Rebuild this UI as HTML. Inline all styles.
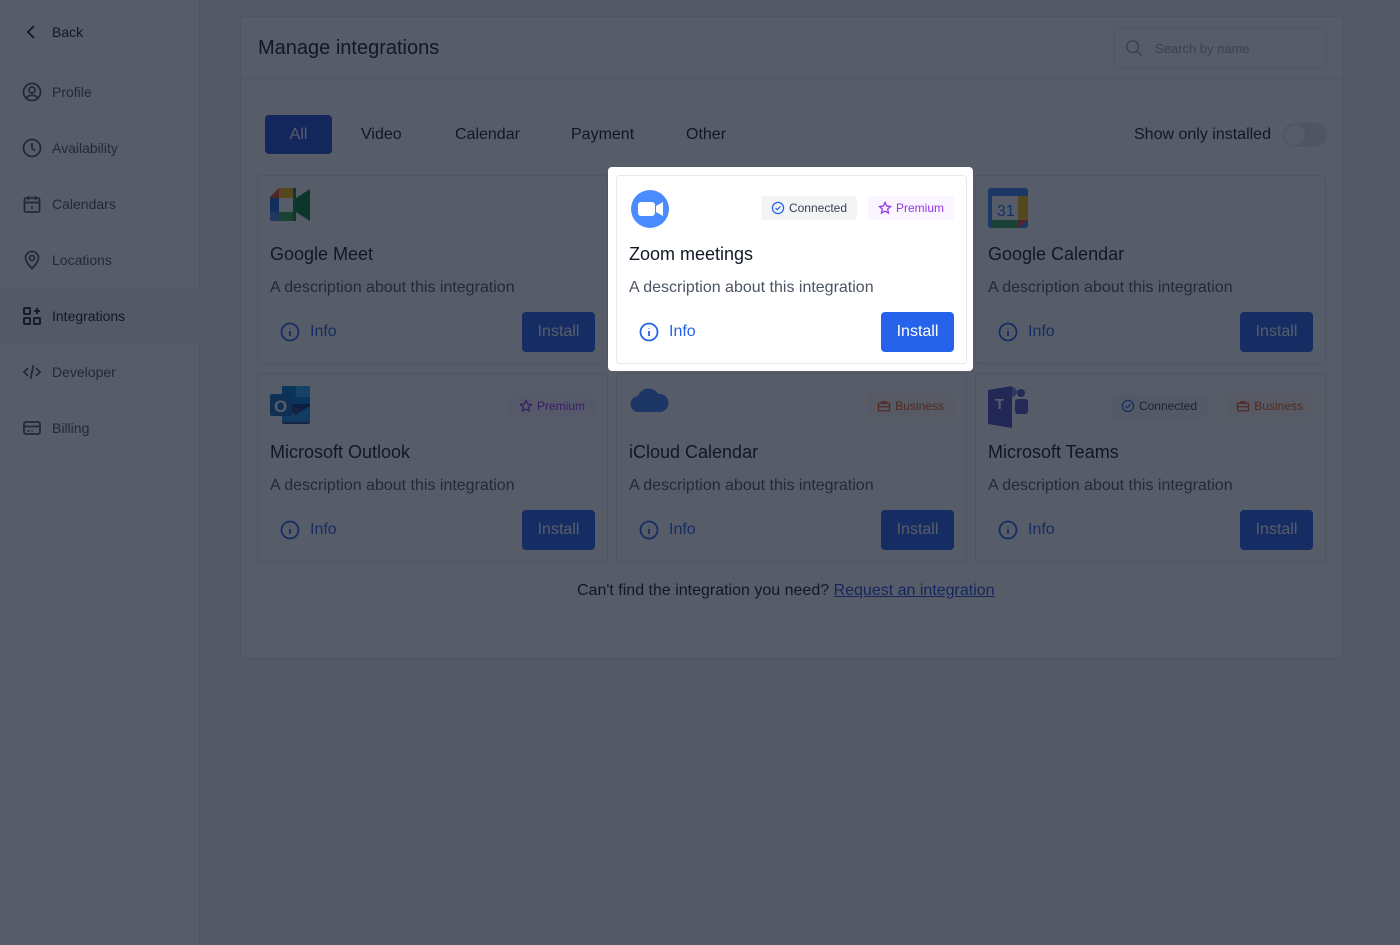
<!DOCTYPE html>
<html><head><meta charset="utf-8"><style>
*{box-sizing:border-box;margin:0;padding:0}
body{width:1400px;height:945px;overflow:hidden;font-family:"Liberation Sans",sans-serif;background:#f3f4f6;position:relative;color:#111827}
.side{position:absolute;left:0;top:0;width:200px;height:945px;background:#fff;border-right:1px solid #e5e7eb}
.nav{position:absolute;left:0;width:200px;height:56px;display:flex;align-items:center;padding-left:22px;font-size:14px;color:#4b5563}
.nav svg{width:20px;height:20px;margin-right:10px;stroke:#4b5563;fill:none;stroke-width:1.8}
.nav.act{background:#f3f4f6;color:#111827}
.nav.act svg{stroke:#111827}
.panel{position:absolute;left:240px;top:16px;width:1103px;height:643px;background:#fff;border:1px solid #e5e7eb;border-radius:4px}
.hdr{height:62px;border-bottom:1px solid #e5e7eb;position:relative}
.hdr h1{position:absolute;left:17px;top:20px;font-size:20px;font-weight:normal;color:#111827}
.search{position:absolute;left:873px;top:11px;width:213px;height:40px;border:1px solid #e5e7eb;border-radius:4px;font-size:13px;color:#9ca3af;padding:12px 0 0 40px}
.tab{position:absolute;top:98px;height:39px;font-size:16px;line-height:39px;color:#111827}
.card{position:absolute;width:351px;height:189px;background:#fff;border:1px solid #e5e7eb;border-radius:4px}
.card .t{position:absolute;left:12px;top:68px;font-size:18px;color:#111827}
.card .d{position:absolute;left:12px;top:103px;font-size:16px;color:#4b5563}
.card .i{position:absolute;left:22px;top:146px;font-size:16px;color:#2563eb;display:flex;align-items:center}
.card .i svg{margin-right:10px}
.card .b{position:absolute;right:12px;top:136px;width:73px;height:40px;background:#2563eb;color:#fff;border-radius:4px;font-size:16px;text-align:center;line-height:40px}
.badge{position:absolute;top:20px;height:24px;border-radius:4px;font-size:12px;line-height:24px;padding:0 10px 0 28px}
.badge svg{position:absolute;left:10px;top:5px}
.bc{background:#f3f4f6;color:#374151}
.bp{background:#faf5ff;color:#9333ea}
.bb{background:#fff7ed;color:#ea580c}
.logo{position:absolute;left:12px;top:12px}
.ov{position:absolute;left:0;top:0;width:1400px;height:945px;background:rgba(15,23,42,0.7)}
.frame{position:absolute;left:608px;top:167px;width:365px;height:204px;background:#fff;border-radius:4px}
</style></head><body>
<div class="side">
<div class="nav" style="top:4px;color:#111827"><svg viewBox="0 0 20 20" style="stroke:#111827"><path d="M12 4 6 10l6 6"/></svg>Back</div>
<div class="nav" style="top:64px"><svg viewBox="0 0 20 20"><circle cx="10" cy="10" r="8.5"/><circle cx="10" cy="8" r="3"/><path d="M4.5 15.5c3-3 8-3 11 0"/></svg>Profile</div>
<div class="nav" style="top:120px"><svg viewBox="0 0 20 20"><circle cx="10" cy="10" r="8.5"/><path d="M10 5v5l3 3"/></svg>Availability</div>
<div class="nav" style="top:176px"><svg viewBox="0 0 20 20"><rect x="2.5" y="4" width="15" height="14" rx="1.5"/><path d="M2.5 8.5h15M6.5 2v4M13.5 2v4M10 12v3"/></svg>Calendars</div>
<div class="nav" style="top:232px"><svg viewBox="0 0 20 20"><path d="M10 18.5s-6.5-6-6.5-10.5a6.5 6.5 0 0 1 13 0c0 4.5-6.5 10.5-6.5 10.5z"/><circle cx="10" cy="8" r="2.5"/></svg>Locations</div>
<div class="nav act" style="top:288px"><svg viewBox="0 0 20 20"><rect x="2" y="2" width="6" height="6" rx=".5"/><rect x="2" y="12" width="6" height="6" rx=".5"/><rect x="12" y="12" width="6" height="6" rx=".5"/><path d="M15 2v6M12 5h6"/></svg>Integrations</div>
<div class="nav" style="top:344px"><svg viewBox="0 0 20 20"><path d="M6 6l-4 4 4 4M14 6l4 4-4 4M11.5 3 8.5 17"/></svg>Developer</div>
<div class="nav" style="top:400px"><svg viewBox="0 0 20 20"><rect x="2" y="4" width="16" height="12" rx="2"/><path d="M2 8.5h16M5.5 13h2M9.5 13h1"/></svg>Billing</div>
</div>
<div class="panel">
<div class="hdr"><h1>Manage integrations</h1>
<div class="search"><svg style="position:absolute;left:10px;top:10px" width="18" height="18" viewBox="0 0 20 20" fill="none" stroke="#9ca3af" stroke-width="1.6"><circle cx="8.5" cy="8.5" r="6.5"/><path d="m13.5 13.5 5 5"/></svg>Search by name</div></div>
<div class="tab" style="left:24px;width:67px;background:#1d4ed8;color:#fff;border-radius:4px;text-align:center">All</div>
<div class="tab" style="left:120px">Video</div>
<div class="tab" style="left:214px">Calendar</div>
<div class="tab" style="left:330px">Payment</div>
<div class="tab" style="left:445px">Other</div>
<div class="tab" style="left:893px">Show only installed</div>
<div style="position:absolute;left:1042px;top:106px;width:44px;height:24px;border-radius:12px;background:#e5e7eb"><div style="position:absolute;left:2px;top:2px;width:20px;height:20px;border-radius:50%;background:#fff"></div></div>
<div style="position:absolute;left:336px;top:565px;font-size:16px;color:#111827">Can't find the integration you need? <span style="color:#1d4ed8;text-decoration:underline">Request an integration</span></div>
</div>
<div class="card" style="left:257px;top:175px">
<svg class="logo" width="40" height="34" viewBox="0 0 40 34"><path d="M9 0h17v10H9z" fill="#fbbc04"/><path d="M0 9 9 0v10H0z" fill="#ea4335"/><path d="M0 10h9v14H0z" fill="#1967d2"/><path d="M0 24h9v9H2a2 2 0 0 1-2-2z" fill="#1967d2" opacity=".8"/><path d="M9 24h17v9H9z" fill="#34a853"/><path d="M26 0v33h-3V0z" fill="#188038"/><path d="M26 10v14l14 9V1z" fill="#00832d"/><rect x="9" y="10" width="14" height="14" fill="#fff"/></svg>
<div class="t">Google Meet</div><div class="d">A description about this integration</div>
<div class="i"><svg width="20" height="20" viewBox="0 0 20 20" fill="none" stroke="#2563eb" stroke-width="1.8"><circle cx="10" cy="10" r="8.5"/><path d="M10 9v5M10 6v.5"/></svg>Info</div><div class="b">Install</div></div>
<div class="card" style="left:975px;top:175px">
<svg class="logo" width="40" height="40" viewBox="0 0 40 40"><rect width="40" height="40" rx="3" fill="#4285f4"/><rect x="4" y="8" width="26" height="24" fill="#fff"/><path d="M30 8h10v24H30z" fill="#fbbc04"/><path d="M4 32h26v8H4z" fill="#34a853"/><path d="M30 32h10l-10 8z" fill="#ea4335"/><text x="9" y="28" font-size="16" fill="#1a73e8" font-family="Liberation Sans">31</text></svg>
<div class="t">Google Calendar</div><div class="d">A description about this integration</div>
<div class="i"><svg width="20" height="20" viewBox="0 0 20 20" fill="none" stroke="#2563eb" stroke-width="1.8"><circle cx="10" cy="10" r="8.5"/><path d="M10 9v5M10 6v.5"/></svg>Info</div><div class="b">Install</div></div>
<div class="card" style="left:257px;top:373px">
<svg class="logo" width="40" height="38" viewBox="0 0 40 38"><rect x="12" y="0" width="28" height="22" fill="#0078d4"/><rect x="26" y="0" width="14" height="11" fill="#28a8ea"/><path d="M12 18h28v18a2 2 0 0 1-2 2H14a2 2 0 0 1-2-2z" fill="#0a2767" opacity=".9"/><path d="M12 20l14 9 14-9v16H12z" fill="#1490df"/><rect x="0" y="8" width="22" height="22" rx="2" fill="#0f6cbd"/><text x="4" y="26" font-size="17" fill="#fff" font-family="Liberation Sans" font-weight="bold">O</text></svg>
<div class="badge bp" style="right:12px"><svg width="14" height="14" viewBox="0 0 20 20" fill="none" stroke="#9333ea" stroke-width="1.8"><path d="M10 2l2.4 5.2 5.6.6-4.2 3.8 1.2 5.6L10 14.4 5 17.2l1.2-5.6L2 7.8l5.6-.6z"/></svg>Premium</div>
<div class="t">Microsoft Outlook</div><div class="d">A description about this integration</div>
<div class="i"><svg width="20" height="20" viewBox="0 0 20 20" fill="none" stroke="#2563eb" stroke-width="1.8"><circle cx="10" cy="10" r="8.5"/><path d="M10 9v5M10 6v.5"/></svg>Info</div><div class="b">Install</div></div>
<div class="card" style="left:616px;top:373px">
<svg class="logo" width="40" height="28" viewBox="0 0 40 28"><path d="M10 26a8 8 0 0 1-1-16A11 11 0 0 1 29 8a8 8 0 0 1 3 18z" fill="#3b82f6"/></svg>
<div class="badge bb" style="right:12px"><svg width="14" height="14" viewBox="0 0 20 20" fill="none" stroke="#ea580c" stroke-width="1.8"><rect x="2" y="6" width="16" height="11" rx="1.5"/><path d="M7 6V4h6v2M2 11h16"/></svg>Business</div>
<div class="t">iCloud Calendar</div><div class="d">A description about this integration</div>
<div class="i"><svg width="20" height="20" viewBox="0 0 20 20" fill="none" stroke="#2563eb" stroke-width="1.8"><circle cx="10" cy="10" r="8.5"/><path d="M10 9v5M10 6v.5"/></svg>Info</div><div class="b">Install</div></div>
<div class="card" style="left:975px;top:373px">
<svg class="logo" width="42" height="42" viewBox="0 0 42 42"><circle cx="33" cy="7" r="4" fill="#5059c9"/><rect x="27" y="13" width="13" height="15" rx="3" fill="#5059c9"/><circle cx="24" cy="6" r="5" fill="#7b83eb"/><path d="M0 4l24-4v42L0 38z" fill="#4b53bc"/><rect x="4" y="10" width="16" height="16" fill="#4b53bc"/><text x="7" y="23" font-size="15" fill="#fff" font-weight="bold" font-family="Liberation Sans">T</text></svg>
<div class="badge bb" style="right:12px"><svg width="14" height="14" viewBox="0 0 20 20" fill="none" stroke="#ea580c" stroke-width="1.8"><rect x="2" y="6" width="16" height="11" rx="1.5"/><path d="M7 6V4h6v2M2 11h16"/></svg>Business</div>
<div class="badge bc" style="right:118px"><svg width="14" height="14" viewBox="0 0 20 20" fill="none" stroke="#2563eb" stroke-width="1.8"><circle cx="10" cy="10" r="8"/><path d="m6.5 10 2.5 2.5 4.5-5"/></svg>Connected</div>
<div class="t">Microsoft Teams</div><div class="d">A description about this integration</div>
<div class="i"><svg width="20" height="20" viewBox="0 0 20 20" fill="none" stroke="#2563eb" stroke-width="1.8"><circle cx="10" cy="10" r="8.5"/><path d="M10 9v5M10 6v.5"/></svg>Info</div><div class="b">Install</div></div>
<div class="ov"></div>
<div class="frame"></div>
<div class="card" style="left:616px;top:175px">
<svg class="logo" width="40" height="40" viewBox="0 0 40 40" style="left:13px;top:13px"><circle cx="20" cy="20" r="19" fill="#4a8cff"/><rect x="8" y="13" width="17" height="14" rx="3" fill="#fff"/><path d="M26 17l7-4v14l-7-4z" fill="#fff"/></svg>
<div class="badge bp" style="right:12px"><svg width="14" height="14" viewBox="0 0 20 20" fill="none" stroke="#9333ea" stroke-width="1.8"><path d="M10 2l2.4 5.2 5.6.6-4.2 3.8 1.2 5.6L10 14.4 5 17.2l1.2-5.6L2 7.8l5.6-.6z"/></svg>Premium</div>
<div class="badge bc" style="right:109px"><svg width="14" height="14" viewBox="0 0 20 20" fill="none" stroke="#2563eb" stroke-width="1.8"><circle cx="10" cy="10" r="8"/><path d="m6.5 10 2.5 2.5 4.5-5"/></svg>Connected</div>
<div class="t">Zoom meetings</div><div class="d">A description about this integration</div>
<div class="i"><svg width="20" height="20" viewBox="0 0 20 20" fill="none" stroke="#2563eb" stroke-width="1.8"><circle cx="10" cy="10" r="8.5"/><path d="M10 9v5M10 6v.5"/></svg>Info</div><div class="b">Install</div></div>
</body></html>
